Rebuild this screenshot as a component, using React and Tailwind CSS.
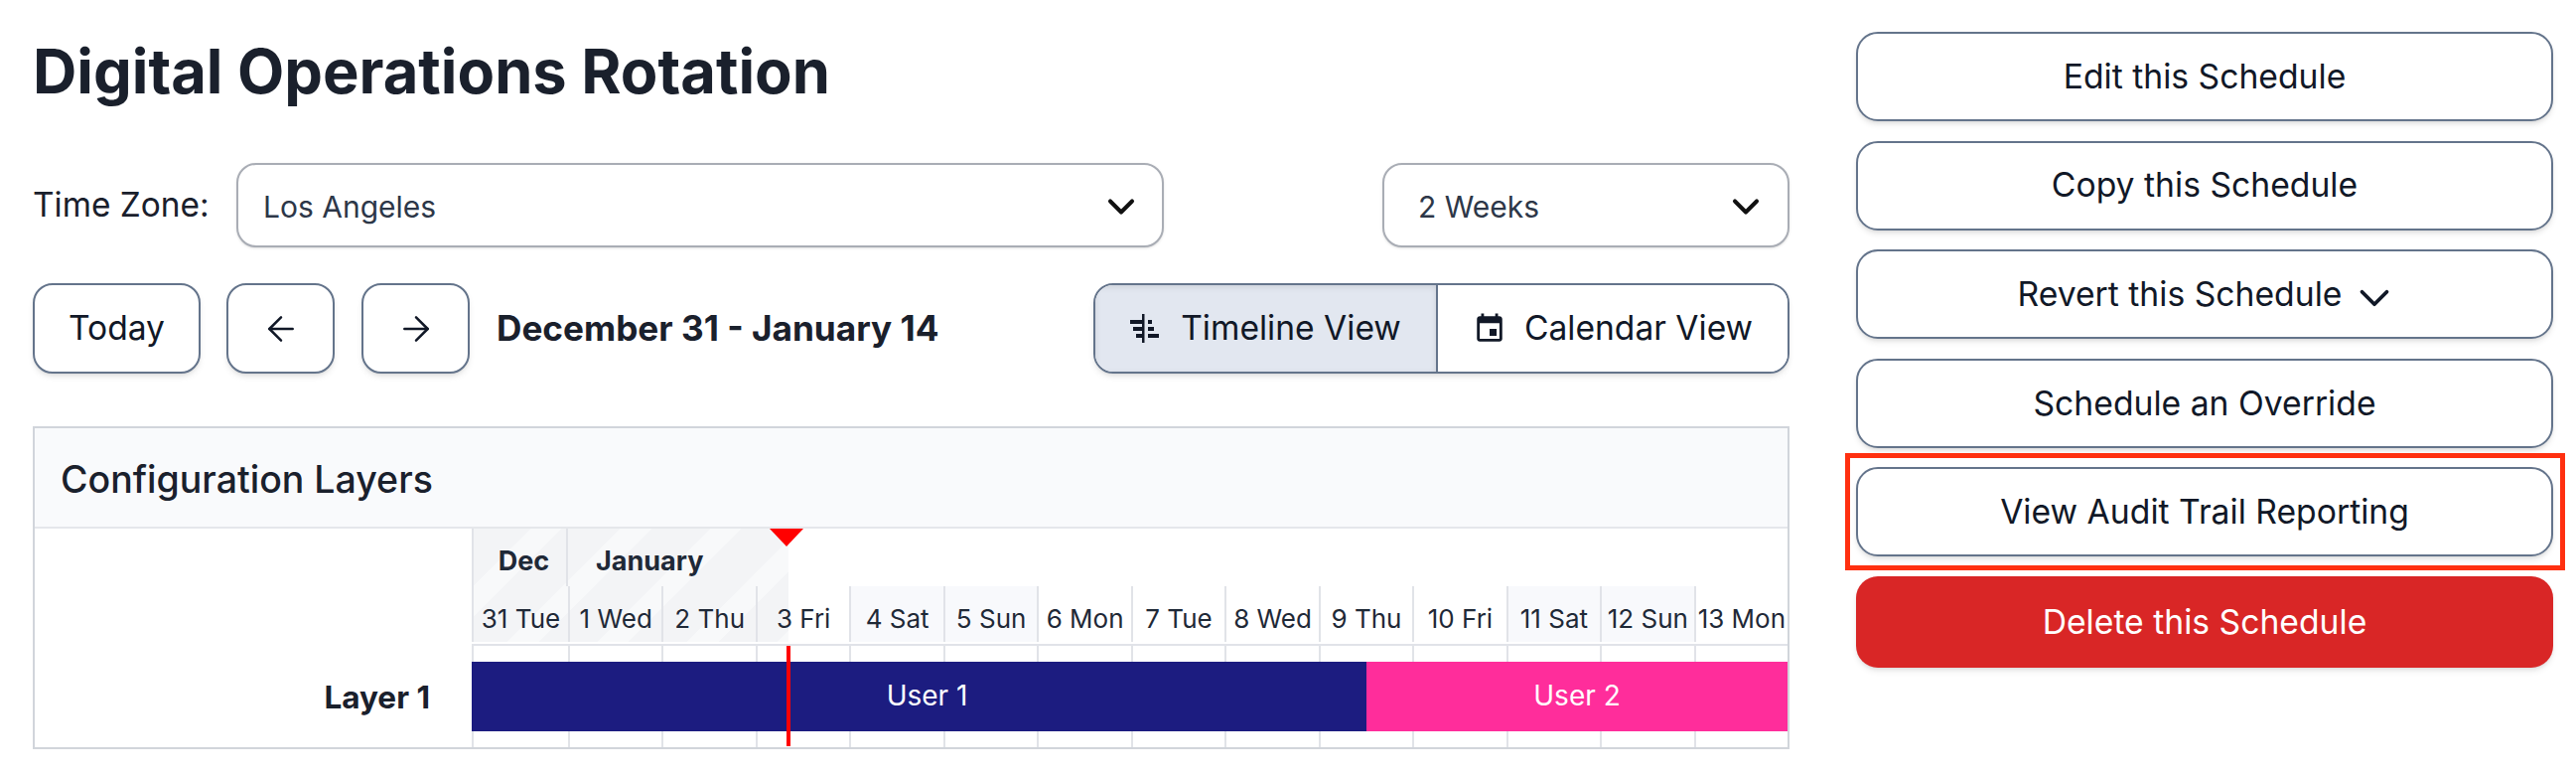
import { ArrowLeft, ArrowRight, ChevronDown } from "lucide-react";

const DAYS = ["31 Tue", "1 Wed", "2 Thu", "3 Fri", "4 Sat", "5 Sun", "6 Mon", "7 Tue", "8 Wed", "9 Thu", "10 Fri", "11 Sat", "12 Sun", "13 Mon"];
const WEEKEND = ["4 Sat", "5 Sun", "11 Sat", "12 Sun"];

const ACTIONS = ["Edit this Schedule", "Copy this Schedule", "Revert this Schedule", "Schedule an Override", "View Audit Trail Reporting"];

function TimelineIcon() {
    return (
        <svg width="29" height="29" viewBox="0 0 29 29" fill="currentColor">
            <rect x="12" y="0" width="2.5" height="29" />
            <rect x="0" y="6" width="12" height="4" />
            <rect x="18" y="6" width="4" height="4" />
            <rect x="3" y="13" width="9" height="4" />
            <rect x="18" y="13" width="6" height="4" />
            <rect x="6" y="20" width="6" height="4" />
            <rect x="18" y="20" width="11" height="4" />
        </svg>
    );
}

function CalendarIcon() {
    return (
        <svg width="34" height="34" viewBox="0 0 24 24" fill="currentColor">
            <path d="M17 12h-5v5h5v-5zM16 1v2H8V1H6v2H5c-1.11 0-1.99.9-1.99 2L3 19c0 1.1.89 2 2 2h14c1.1 0 2-.9 2-2V5c0-1.1-.9-2-2-2h-1V1h-2zm3 18H5V8h14v11z" />
        </svg>
    );
}

function Select({ label, className }) {
    return (
        <div className={`h-[85px] flex items-center justify-between bg-white border-2 border-[#a9adb5] rounded-[20px] shadow-sm text-[30px] text-[#2d3748] ${className}`}>
            <span className="block pt-[4px]">{label}</span>
            <ChevronDown size={44} strokeWidth={2.2} className="text-[#111111] mt-[2px]" />
        </div>
    );
}

function NavButton({ children, className }) {
    return (
        <button className={`h-[91px] flex items-center justify-center bg-white border-2 border-[#64748b] rounded-[20px] shadow-md text-[33.6px] text-[#111827] ${className}`}>
            {children}
        </button>
    );
}

function GridLines() {
    return (
        <div className="absolute inset-0 flex">
            {DAYS.map((d, i) => (
                <div key={d} className={`border-l-2 border-[#e1e3e8] ${i === 0 ? "w-[97px]" : "flex-1"}`} />
            ))}
        </div>
    );
}

export default function App() {
    return (
        <div className="flex w-[2594px] h-[782px] bg-white text-[#111827] font-['Inter',sans-serif] overflow-hidden">
            {/* left side */}
            <div className="ml-[33px] w-[1769px] flex flex-col">
                <div className="h-[164px] pt-[34px]">
                    <h1 className="text-[61.4px] leading-[76px] font-bold text-[#1a202c]">Digital Operations Rotation</h1>
                </div>

                <div className="flex items-center">
                    <span className="w-[205px] text-[33.4px] text-[#1a202c]">Time Zone:</span>
                    <Select label="Los Angeles" className="w-[934px] pl-[25px] pr-[19px]" />
                    <Select label="2 Weeks" className="w-[410px] ml-auto pl-[34px] pr-[20px]" />
                </div>

                <div className="mt-[36px] flex items-center">
                    <NavButton className="w-[169px]">Today</NavButton>
                    <NavButton className="w-[109px] ml-[26px]"><ArrowLeft size={40} strokeWidth={1.5} /></NavButton>
                    <NavButton className="w-[109px] ml-[27px]"><ArrowRight size={40} strokeWidth={1.5} /></NavButton>
                    <span className="ml-[27px] text-[35.2px] font-bold text-[#1a202c]">December 31 - January 14</span>

                    <div className="ml-auto h-[91px] w-[701px] flex border-2 border-[#64748b] rounded-[20px] shadow-md overflow-hidden text-[33.6px]">
                        <div className="w-[345px] flex items-center justify-center gap-[22px] bg-[#e2e7f0] shadow-[inset_0_2px_6px_rgba(0,0,0,0.1)] border-r-2 border-[#64748b]">
                            <TimelineIcon />
                            <span>Timeline View</span>
                        </div>
                        <div className="flex-1 flex items-center justify-center gap-[18px] bg-white">
                            <CalendarIcon />
                            <span>Calendar View</span>
                        </div>
                    </div>
                </div>

                {/* panel */}
                <div className="mt-[53px] h-[325px] border-2 border-[#d1d5db] flex flex-col overflow-hidden">
                    <div className="h-[101px] shrink-0 flex items-center pl-[26px] pt-[6px] bg-[#f9fafc] border-b-2 border-[#e5e7eb] text-[37.5px] font-medium text-[#1a202c]">
                        Configuration Layers
                    </div>
                    <div className="flex flex-1">
                        <div className="w-[440px] shrink-0 flex items-end justify-end pr-[42px] pb-[27px] text-[31.5px] font-bold text-[#1a202c]">
                            Layer 1
                        </div>
                        <div className="relative flex-1 flex flex-col">
                            {/* past time stripes */}
                            <div className="absolute left-0 top-0 w-[319px] h-[114px] bg-[repeating-linear-gradient(135deg,#f3f4f6_0px,#f3f4f6_42px,#f8f9fa_42px,#f8f9fa_64px)]" />

                            <div className="relative h-[58px] flex items-center text-[27px] font-bold text-[#1f2937]">
                                <div className="w-[97px] h-full flex items-center justify-center pl-[8px] pt-[8px] border-l-2 border-r-2 border-[#e1e3e8]">Dec</div>
                                <div className="ml-[28px] pt-[8px]">January</div>
                            </div>

                            <div className="relative h-[56px] flex text-[26px] text-[#1f2937]">
                                {DAYS.map((d, i) => (
                                    <div
                                        key={d}
                                        className={`flex items-center justify-center pt-[8px] whitespace-nowrap overflow-hidden border-l-2 border-[#e1e3e8] ${i === 0 ? "w-[97px]" : "flex-1"} ${WEEKEND.includes(d) ? "bg-[#f8f9fc]" : ""}`}
                                    >
                                        {d}
                                    </div>
                                ))}
                            </div>

                            <div className="relative mt-[2px] flex-1 border-t-2 border-[#e1e3e8] pt-[16px]">
                                <GridLines />
                                <div className="relative flex h-[70px] text-[28px] text-white">
                                    <div className="w-[901px] pl-[16px] pb-[2px] flex items-center justify-center bg-[#1c1c80]">User 1</div>
                                    <div className="flex-1 pb-[2px] flex items-center justify-center bg-[#ff2d9b]">User 2</div>
                                </div>
                            </div>

                            {/* now marker */}
                            <div className="absolute left-[300px] top-0 w-0 h-0 border-l-[17px] border-r-[17px] border-t-[18px] border-l-transparent border-r-transparent border-t-[#ff0000]" />
                            <div className="absolute left-[317px] top-[118px] bottom-[1px] w-[3.5px] bg-[#ff0000]" />
                        </div>
                    </div>
                </div>
            </div>

            {/* right side */}
            <div className="ml-[67px] w-[702px] pt-[32px] flex flex-col gap-[19.6px] text-[33.7px]">
                {ACTIONS.map((a) => (
                    <div key={a} className="relative h-[90px] shrink-0">
                        <button className="w-full h-full flex items-center justify-center gap-[8px] bg-white border-2 border-[#64748b] rounded-[22px] shadow-md">
                            <span>{a}</span>
                            {a.startsWith("Revert") && <ChevronDown size={50} strokeWidth={1.8} className="-mr-[8px] mt-[8px]" />}
                        </button>
                        {a.startsWith("View") && (
                            <div className="absolute -left-[11px] -right-[12px] -top-[14px] -bottom-[14px] border-[5px] border-[#ff3010] pointer-events-none" />
                        )}
                    </div>
                ))}
                <button className="h-[92px] shrink-0 flex items-center justify-center bg-[#d92626] text-white rounded-[22px] shadow-md">
                    Delete this Schedule
                </button>
            </div>
        </div>
    );
}
